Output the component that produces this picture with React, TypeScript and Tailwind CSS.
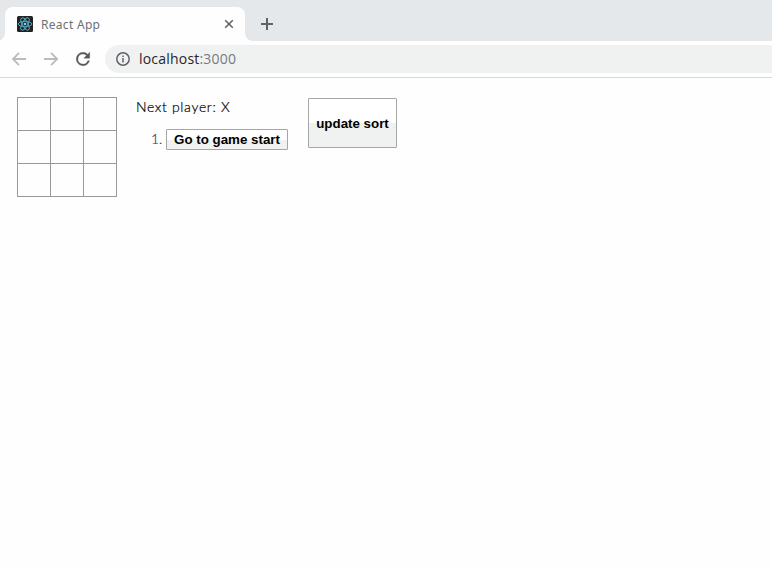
import React from 'react';

function ReactIcon() {
  return (
    <svg width="16" height="16" viewBox="0 0 16 16" className="shrink-0">
      <rect width="16" height="16" rx="1.5" fill="#222222" />
      <g fill="none" stroke="#4fa9c2" strokeWidth="1">
        <ellipse cx="8" cy="8" rx="6.8" ry="2.7" />
        <ellipse cx="8" cy="8" rx="6.8" ry="2.7" transform="rotate(60 8 8)" />
        <ellipse cx="8" cy="8" rx="6.8" ry="2.7" transform="rotate(120 8 8)" />
      </g>
      <circle cx="8" cy="8" r="1.3" fill="#61dafb" />
    </svg>
  );
}

function TabStrip() {
  return (
    <header className="flex h-[41px] items-end bg-[#e4e8eb]">
      <svg width="5" height="8" viewBox="3 0 5 8" className="shrink-0">
        <path d="M8 0v8H0A8 8 0 0 0 8 0Z" fill="#fefefe" />
      </svg>
      <div className="flex h-[34px] w-[240px] items-center rounded-t-lg bg-[#fefefe] pl-3 pr-[11px]">
        <ReactIcon />
        <span className="ml-2 flex-1 whitespace-nowrap pt-0.5 font-['Noto_Sans',sans-serif] text-[12px] leading-4 tracking-[0.3px] text-[#6d7074]">
          React App
        </span>
        <svg width="10" height="10" viewBox="0 0 10 10" stroke="#5f6368" strokeWidth="1.6">
          <path d="M1.2 1.2 8.8 8.8M8.8 1.2 1.2 8.8" />
        </svg>
      </div>
      <svg width="8" height="8" viewBox="0 0 8 8" className="shrink-0">
        <path d="M0 0v8h8A8 8 0 0 1 0 0Z" fill="#fefefe" />
      </svg>
      <svg width="12" height="12" viewBox="0 0 12 12" stroke="#5f6368" strokeWidth="2" className="mb-[11px] ml-2">
        <path d="M6 0v12M0 6h12" />
      </svg>
    </header>
  );
}

function Toolbar() {
  return (
    <nav className="flex h-[37px] items-center border-b border-[#d7d9da] bg-[#fefefe] pl-3">
      <svg width="15" height="14" viewBox="0 0 15 14" fill="none" stroke="#b9bbbd" strokeWidth="1.8">
        <path d="M14 7H1.5M7 .8 .9 7l6.1 6.2" />
      </svg>
      <svg width="15" height="14" viewBox="0 0 15 14" fill="none" stroke="#b9bbbd" strokeWidth="1.8" className="ml-[17px]">
        <path d="M0 7h13M7 .8 13.2 7 7 13.2" />
      </svg>
      <svg width="24" height="24" viewBox="0 0 24 24" className="ml-3" fill="#55595d" transform="scale(.84)">
        <path d="M17.65 6.35A7.96 7.96 0 0 0 12 4a8 8 0 1 0 7.73 10h-2.08A6 6 0 1 1 12 6c1.66 0 3.14.69 4.22 1.78L13 11h7V4l-2.35 2.35Z" stroke="#55595d" strokeWidth=".4" />
      </svg>
      <div className="ml-[10px] flex h-7 flex-1 items-center rounded-l-full bg-[#f0f2f1] pl-[11px]">
        <svg width="14" height="14" viewBox="0 0 14 14" fill="none" stroke="#5f6368" strokeWidth="1.5">
          <circle cx="7" cy="7" r="6.2" />
          <path d="M7 6v4.5M7 3.4v1.6" />
        </svg>
        <span className="ml-[9px] whitespace-nowrap font-['Open_Sans','Noto_Sans',sans-serif] text-[14px] leading-5 tracking-[0.2px] text-[#24262a]">
          localhost<span className="text-[#777a7e]">:3000</span>
        </span>
      </div>
    </nav>
  );
}

function Square() {
  return <button className="-mr-px -mt-px size-[34px] border border-[#999] bg-[#fefefe]" />;
}

function Board() {
  return (
    <div className="grid w-[99px] grid-cols-[repeat(3,33px)] grid-rows-[repeat(3,33px)] pt-px">
      {Array.from({ length: 9 }, (_, i) => (
        <Square key={i} />
      ))}
    </div>
  );
}

const buttonStyle =
  "border border-[#a6a6a6] rounded-[1px] bg-linear-to-b from-white from-50% to-[#f0f2f1] to-50% font-['Liberation_Sans',Arial,sans-serif] text-[13.333px] font-bold whitespace-nowrap text-black";

export default function App() {
  return (
    <div className="h-[567px] overflow-hidden bg-[#fefefe]">
      <TabStrip />
      <Toolbar />
      <main className="flex items-start pl-[17px] pt-[19px] font-['Lato',sans-serif] text-[14px] font-light text-black">
        <Board />
        <section className="ml-5 w-[152px]">
          <div className="h-[21px] whitespace-nowrap leading-[19px] tracking-[0.65px] [-webkit-text-stroke:0.2px_black]">
            Next player: X
          </div>
          <ol className="mt-[11px]">
            <li className="flex items-center">
              <span className="w-[30px] pb-0.5 pl-[15px] leading-4 text-[#551a6b] [-webkit-text-stroke:0.2px_#551a6b]">1.</span>
              <button className={`${buttonStyle} h-[21px] w-[122px]`}>Go to game start</button>
            </li>
          </ol>
        </section>
        <button className={`${buttonStyle} ml-5 mt-px h-[50px] w-[89px] pt-0.5`}>update sort</button>
      </main>
    </div>
  );
}
